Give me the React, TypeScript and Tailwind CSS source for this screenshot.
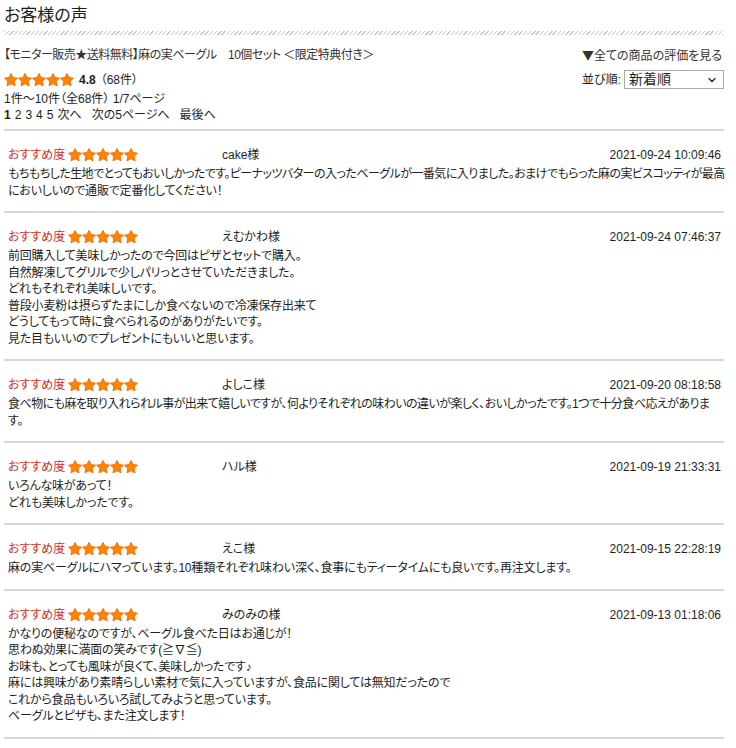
import { ChevronDown } from 'lucide-react'

interface Review {
    name: string
    date: string
    lines: string[]
    tight?: boolean
}

const reviews: Review[] = [
    {
        name: 'cake様',
        date: '2021-09-24 10:09:46',
        lines: [
            'もちもちした生地でとってもおいしかったです。ピーナッツバターの入ったベーグルが一番気に入りました。おまけでもらった麻の実ビスコッティが最高',
            'においしいので通販で定番化してください！',
        ],
        tight: true,
    },
    {
        name: 'えむかわ様',
        date: '2021-09-24 07:46:37',
        lines: [
            '前回購入して美味しかったので今回はピザとセットで購入。',
            '自然解凍してグリルで少しパリっとさせていただきました。',
            'どれもそれぞれ美味しいです。',
            '普段小麦粉は摂らずたまにしか食べないので冷凍保存出来て',
            'どうしてもって時に食べられるのがありがたいです。',
            '見た目もいいのでプレゼントにもいいと思います。',
        ],
    },
    {
        name: 'よしこ様',
        date: '2021-09-20 08:18:58',
        lines: [
            '食べ物にも麻を取り入れられル事が出来て嬉しいですが、何よりそれぞれの味わいの違いが楽しく、おいしかったです。1つで十分食べ応えがありま',
            'す。',
        ],
        tight: true,
    },
    {
        name: 'ハル様',
        date: '2021-09-19 21:33:31',
        lines: ['いろんな味があって！', 'どれも美味しかったです。'],
    },
    {
        name: 'えこ様',
        date: '2021-09-15 22:28:19',
        lines: ['麻の実ベーグルにハマっています。10種類それぞれ味わい深く、食事にもティータイムにも良いです。再注文します。'],
    },
    {
        name: 'みのみの様',
        date: '2021-09-13 01:18:06',
        lines: [
            'かなりの便秘なのですが、ベーグル食べた日はお通じが！',
            '思わぬ効果に満面の笑みです(≧∇≦)',
            'お味も、とっても風味が良くて、美味しかったです♪',
            '麻には興味があり素晴らしい素材で気に入っていますが、食品に関しては無知だったので',
            'これから食品もいろいろ試してみようと思っています。',
            'ベーグルとピザも、また注文します！',
        ],
    },
]

function Stars({ size = 14 }: { size?: number }) {
    return (
        <span className="flex">
            {[0, 1, 2, 3, 4].map(i => (
                <svg key={i} width={size} height={size} viewBox="1 1 22 22">
                    <polygon
                        points="12,1.8 15.1,8.1 22.2,9.1 17.1,14.1 18.3,21.2 12,17.9 5.7,21.2 6.9,14.1 1.8,9.1 8.9,8.1"
                        fill="#ff8400"
                        stroke="#f26a00"
                        strokeWidth="1.4"
                        strokeLinejoin="round"
                    />
                </svg>
            ))}
        </span>
    )
}

export default function App() {
    return (
        <div className="min-h-[748px] bg-white text-[#1e1e1e] font-['Liberation_Sans','Noto_Sans_CJK_JP',sans-serif] text-[12px] [font-feature-settings:'palt']">
            <div className="ml-1 w-[720px]">
                <h2 className="pt-1 text-[17px] leading-[24px] font-['Liberation_Serif','Noto_Sans_CJK_JP',serif]">お客様の声</h2>
                <div className="mt-[3px] h-[4px] w-[719px] bg-[repeating-linear-gradient(-45deg,#c8c8c8_0px,#c8c8c8_1px,#fff_1px,#fff_3px)]" />

                <div className="mt-[12px] flex justify-between leading-[16px] text-[#333]">
                    <span className="tracking-[-0.5px]">【モニター販売★送料無料】麻の実ベーグル　10個セット ＜限定特典付き＞</span>
                    <span className="mr-[2px]">
                        <span className="font-['Noto_Sans_CJK_JP',sans-serif]">▼</span>全ての商品の評価を見る
                    </span>
                </div>

                <div className="mt-[6px] flex items-center justify-between">
                    <div className="flex items-center gap-[5px]">
                        <Stars size={14} />
                        <span className="font-bold">4.8</span>
                        <span>（68件）</span>
                    </div>
                    <div className="flex items-center gap-[3px]">
                        <span>並び順:</span>
                        <div className="relative flex h-[19px] w-[100px] items-center border border-[#a9a9a9] bg-white pl-[4px] text-[14px]">
                            新着順
                            <ChevronDown size={12} strokeWidth={2.5} className="absolute right-[5px] top-[3px]" />
                        </div>
                    </div>
                </div>

                <p className="mt-[2px] leading-[16px]">1件～10件（全68件） 1/7ページ</p>
                <p className="flex gap-[4px] leading-[16px]">
                    <span className="font-bold">1</span>
                    <span>2</span>
                    <span>3</span>
                    <span>4</span>
                    <span>5</span>
                    <span>次へ</span>
                    <span className="ml-[6px]">次の5ページへ</span>
                    <span className="ml-[6px]">最後へ</span>
                </p>

                <div className="mt-[6px]">
                    {reviews.map((r, i) => (
                        <div key={i} className="border-t-2 border-[#d8d8d8] pl-1 pr-[3px] pt-[15px] pb-[12px]">
                            <div className="flex h-[18px] items-center">
                                <div className="flex w-[214px] items-center gap-[3px]">
                                    <span className="text-[#d0302c]">おすすめ度</span>
                                    <Stars size={14} />
                                </div>
                                <span className="flex-1">{r.name}</span>
                                <span>{r.date}</span>
                            </div>
                            <div className="mt-[2px] leading-[16.5px]">
                                {r.lines.map((l, j) => (
                                    <p
                                        key={j}
                                        className={r.tight && j === 0 ? 'whitespace-nowrap tracking-[-0.55px]' : 'whitespace-nowrap tracking-[-0.2px]'}
                                    >
                                        {l}
                                    </p>
                                ))}
                            </div>
                        </div>
                    ))}
                    <div className="border-t-2 border-[#d8d8d8]" />
                </div>
            </div>
        </div>
    )
}
